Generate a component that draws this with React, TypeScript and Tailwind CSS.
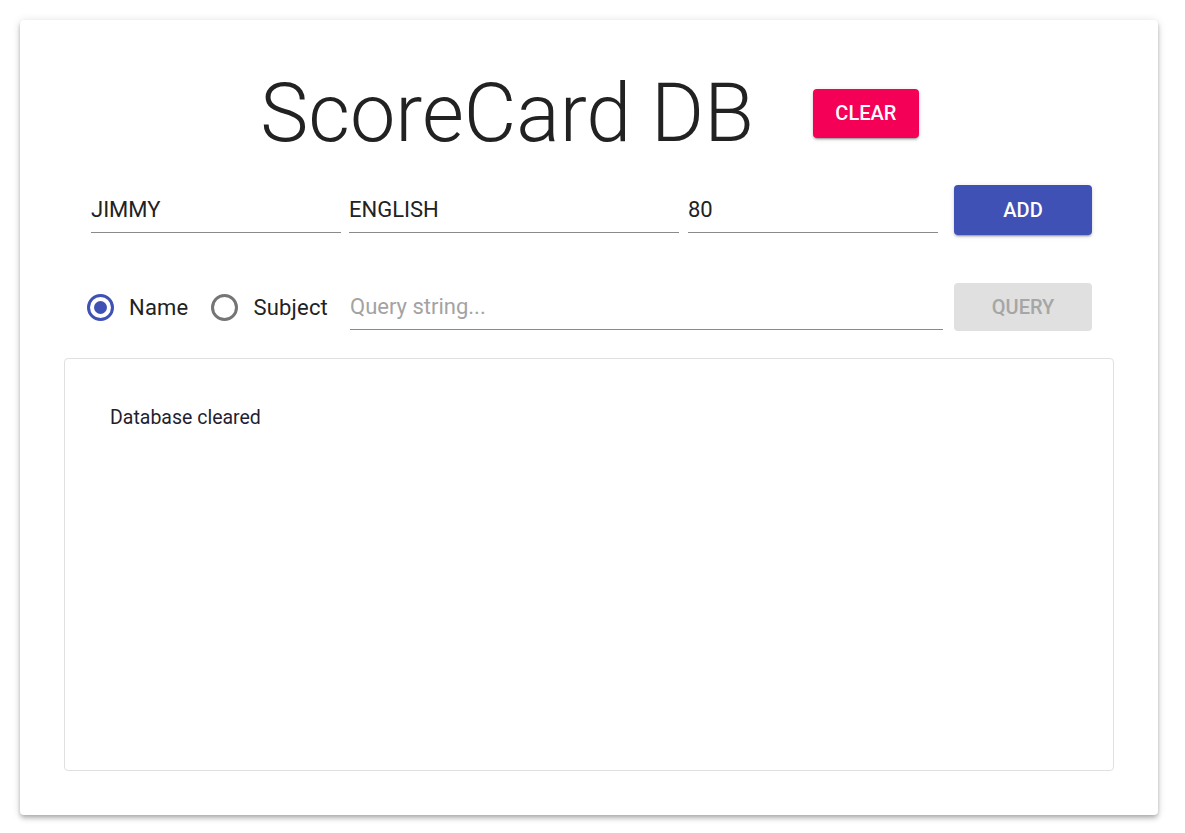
/**
 * ScoreCard DB - simple score database panel
 */

const FIELDS = [
  { value: 'JIMMY', width: 'w-[250px]' },
  { value: 'ENGLISH', width: 'w-[330px]' },
  { value: '80', width: 'w-[250px]' },
];

function Radio({ checked, label }: { checked: boolean; label: string }) {
  return (
    <label className="flex items-center gap-[15px]">
      <span
        className={
          checked
            ? 'flex h-[27px] w-[27px] items-center justify-center rounded-full border-[3px] border-[#3f51b5]'
            : 'flex h-[27px] w-[27px] items-center justify-center rounded-full border-[3px] border-[#757575]'
        }
      >
        {checked && <span className="h-[13px] w-[13px] rounded-full bg-[#3f51b5]" />}
      </span>
      <span className="text-[22px] tracking-[0.2px] text-[#222]">{label}</span>
    </label>
  );
}

export default function App() {
  return (
    <div className="min-h-[833px] bg-white pt-5 pl-5 font-['Roboto',sans-serif]">
      <div className="flex h-[795px] w-[1138px] flex-col rounded-[4px] bg-white shadow-[0_2px_4px_-1px_rgba(0,0,0,0.2),0_4px_5px_0_rgba(0,0,0,0.14),0_1px_10px_0_rgba(0,0,0,0.12)]">
        <div className="mt-[46px] flex items-center justify-center gap-[59px] pl-[1px]">
          <h1 className="text-[81px] font-light leading-[96px] text-[#222]">ScoreCard DB</h1>
          <button className="mb-[2px] h-[49px] w-[106px] rounded-[4px] bg-[#f50057] text-[20px] font-medium text-white shadow-[0_3px_1px_-2px_rgba(0,0,0,0.2),0_2px_2px_0_rgba(0,0,0,0.14),0_1px_5px_0_rgba(0,0,0,0.12)]">
            CLEAR
          </button>
        </div>

        <div className="mt-[23px] flex items-center pl-[71px]">
          {FIELDS.map((f, i) => (
            <div
              key={f.value}
              className={`${f.width} ${i === 1 ? 'ml-[8px]' : i === 2 ? 'ml-[9px]' : ''} flex h-[45px] items-center border-b border-[#8a8a8a] text-[22px] text-[#222]`}
            >
              {f.value}
            </div>
          ))}
          <button className="ml-[16px] h-[50px] w-[138px] rounded-[4px] bg-[#3f51b5] text-[20px] font-medium text-white shadow-[0_3px_1px_-2px_rgba(0,0,0,0.2),0_2px_2px_0_rgba(0,0,0,0.14),0_1px_5px_0_rgba(0,0,0,0.12)]">
            ADD
          </button>
        </div>

        <div className="mt-[48px] flex items-center pl-[67px]">
          <Radio checked label="Name" />
          <div className="ml-[23px]">
            <Radio checked={false} label="Subject" />
          </div>
          <div className="ml-[22px] flex h-[46px] w-[593px] items-center border-b border-[#8a8a8a] text-[22px] text-[#a3a3a3]">
            Query string...
          </div>
          <button className="ml-[11px] h-[48px] w-[138px] rounded-[4px] bg-[#e0e0e0] text-[20px] font-medium text-[#a6a6a6]">
            QUERY
          </button>
        </div>

        <div className="mx-[44px] mt-[27px] h-[413px] rounded-[4px] border border-[#e0e0e0] px-[45px] pt-[44px]">
          <p className="text-[19.5px] text-[#1f1f33]">Database cleared</p>
        </div>
      </div>
    </div>
  );
}
